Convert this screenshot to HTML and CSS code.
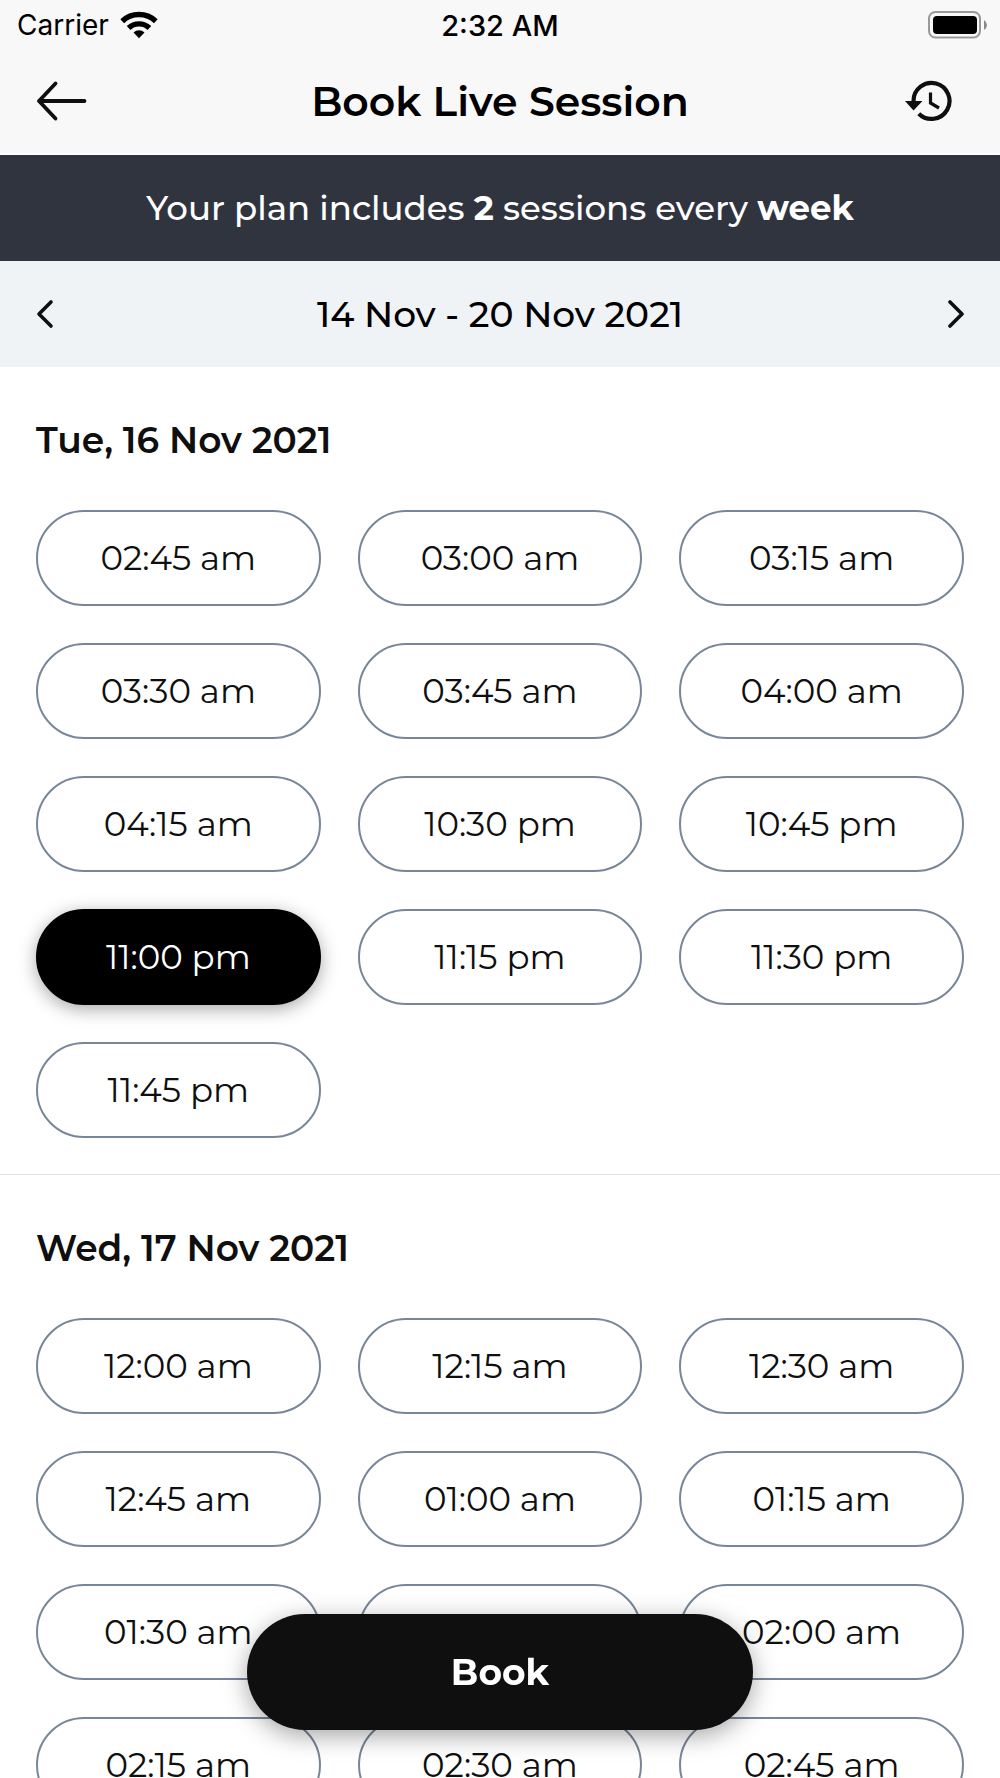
FILE: index.html
```html
<!DOCTYPE html>
<html lang="en">
<head>
<meta charset="utf-8">
<meta name="viewport" content="width=device-width, initial-scale=1">
<title>Book Live Session</title>
<link rel="stylesheet" href="styles.css">
</head>
<body>
<div class="app">
  <header class="top">
    <div class="status">
      <div class="status-left">
        <span>Carrier</span>
        <svg width="38" height="28" viewBox="0 0 38 28" aria-hidden="true">
          <g fill="none" stroke="#000" stroke-width="5.4">
            <path d="M2.2 10.2A24.5 24.5 0 0 1 35.8 10.2"/>
            <path d="M8.6 17A15.2 15.2 0 0 1 29.4 17"/>
          </g>
          <path d="M19 27.2L13.5 21.4A8.2 8.2 0 0 1 24.5 21.4Z"/>
        </svg>
      </div>
      <span class="status-time">2:32 AM</span>
      <svg class="status-battery" width="60" height="28" viewBox="0 0 60 28" aria-hidden="true">
        <rect x="1" y="1" width="51" height="25.500" rx="6.500" fill="none" stroke="#999" stroke-width="2"/>
        <rect x="5" y="5" width="44" height="18" rx="4"/>
        <path d="M56 9Q59 11 59 14T56 19Z" fill="#888"/>
      </svg>
    </div>
    <div class="nav">
      <button class="icon-button" type="button" aria-label="Back">
        <svg width="52" height="42" viewBox="0 0 52 42">
          <path d="M19.500 3.500L3 21L19.500 38.500M3 21H48.500" fill="none" stroke="#0f0f0f" stroke-width="3.800" stroke-linecap="round" stroke-linejoin="round"/>
        </svg>
      </button>
      <h1 class="title">Book Live Session</h1>
      <button class="icon-button" type="button" aria-label="Session history">
        <svg width="48" height="42" viewBox="0 0 48 42">
          <path d="M9.500 21A18 18 0 1 1 14.800 33.700" fill="none" stroke="#0f0f0f" stroke-width="4.200"/>
          <path d="M1 21H18.500L9.500 30.500Z" fill="#0f0f0f"/>
          <path d="M26.500 12.500V23L35 28" fill="none" stroke="#0f0f0f" stroke-width="3.200"/>
        </svg>
      </button>
    </div>
  </header>

  <p class="plan">Your plan includes <strong>2</strong> sessions every <strong>week</strong></p>

  <div class="week">
    <button class="icon-button" type="button" aria-label="Previous week">
      <svg width="18" height="30" viewBox="0 0 18 30"><path d="M15 3L3 15L15 27" fill="none" stroke="#0f0f0f" stroke-width="3.600" stroke-linecap="round" stroke-linejoin="round"/></svg>
    </button>
    <span class="week-range">14 Nov - 20 Nov 2021</span>
    <button class="icon-button" type="button" aria-label="Next week">
      <svg width="18" height="30" viewBox="0 0 18 30"><path d="M4 3L16 15L4 27" fill="none" stroke="#0f0f0f" stroke-width="3.600" stroke-linecap="round" stroke-linejoin="round"/></svg>
    </button>
  </div>

  <main class="days">
    <section class="day">
      <h2 class="day-title">Tue, 16 Nov 2021</h2>
      <div class="slots">
        <button class="slot" type="button">02:45 am</button>
        <button class="slot" type="button">03:00 am</button>
        <button class="slot" type="button">03:15 am</button>
        <button class="slot" type="button">03:30 am</button>
        <button class="slot" type="button">03:45 am</button>
        <button class="slot" type="button">04:00 am</button>
        <button class="slot" type="button">04:15 am</button>
        <button class="slot" type="button">10:30 pm</button>
        <button class="slot" type="button">10:45 pm</button>
        <button class="slot slot-selected" type="button" aria-pressed="true">11:00 pm</button>
        <button class="slot" type="button">11:15 pm</button>
        <button class="slot" type="button">11:30 pm</button>
        <button class="slot" type="button">11:45 pm</button>
      </div>
    </section>
    <section class="day">
      <h2 class="day-title">Wed, 17 Nov 2021</h2>
      <div class="slots">
        <button class="slot" type="button">12:00 am</button>
        <button class="slot" type="button">12:15 am</button>
        <button class="slot" type="button">12:30 am</button>
        <button class="slot" type="button">12:45 am</button>
        <button class="slot" type="button">01:00 am</button>
        <button class="slot" type="button">01:15 am</button>
        <button class="slot" type="button">01:30 am</button>
        <button class="slot" type="button">01:45 am</button>
        <button class="slot" type="button">02:00 am</button>
        <button class="slot" type="button">02:15 am</button>
        <button class="slot" type="button">02:30 am</button>
        <button class="slot" type="button">02:45 am</button>
      </div>
    </section>
  </main>

  <button class="book" type="button">Book</button>
</div>
</body>
</html>
```
FILE: styles.css
```css
* {
  box-sizing: border-box;
}

body {
  margin: 0;
  background: #fff;
  color: #0f0f0f;
  font-family: Montserrat, Inter, "Open Sans", sans-serif;
}

button {
  padding: 0;
  border: 0;
  background: none;
  color: inherit;
  font: inherit;
  cursor: pointer;
}

svg {
  display: block;
}

.app {
  display: flex;
  flex-direction: column;
  height: 100vh;
}

.top {
  flex: none;
  background: #f8f8f8;
  border-bottom: 2px solid #fff;
  color: #000;
}

.status {
  display: grid;
  grid-template-columns: 1fr auto 1fr;
  align-items: center;
  height: 50px;
  padding: 0 12px;
  font-family: Inter, sans-serif;
  font-size: 28px;
}

.status-left {
  display: flex;
  align-items: center;
  gap: 11px;
  padding-left: 5px;
}

.status-time {
  font-size: 29px;
  font-weight: 500;
}

.status-battery {
  justify-self: end;
}

.nav {
  display: grid;
  grid-template-columns: 60px 1fr 60px;
  align-items: center;
  justify-items: start;
  height: 103px;
  padding: 0 36px 2px;
}

.title {
  justify-self: center;
  margin: 0;
  font-size: 41px;
  font-weight: 600;
}

.plan {
  flex: none;
  margin: 0;
  padding: 0 36px;
  background: #30343f;
  color: #fff;
  font-size: 34px;
  font-weight: 500;
  line-height: 106px;
  text-align: center;
}

.plan strong {
  font-weight: 700;
}

.week {
  flex: none;
  display: flex;
  align-items: center;
  justify-content: space-between;
  height: 106px;
  padding: 0 36px;
  background: #eff3f6;
  color: #000;
}

.week-range {
  font-size: 36px;
  font-weight: 500;
}

.days {
  flex: 1;
  min-height: 0;
  overflow-y: auto;
  scrollbar-width: none;
}

.day {
  padding: 50px 36px 36px;
}

.day + .day {
  border-top: 1px solid #dce2e5;
}

.day-title {
  margin: 0 0 47px;
  font-size: 36px;
  font-weight: 600;
  line-height: 46px;
}

.slots {
  display: grid;
  grid-template-columns: repeat(3, 1fr);
  gap: 37px;
}

.slot {
  height: 96px;
  border: 2px solid #788699;
  border-radius: 48px;
  font-size: 34px;
  font-weight: 400;
}

.slot-selected {
  border-color: #000;
  background: #000;
  color: #fff;
  box-shadow: 0 4px 18px rgba(0, 0, 0, 0.35);
}

.book {
  position: fixed;
  right: 0;
  bottom: 48px;
  left: 0;
  width: 506px;
  max-width: 90%;
  height: 116px;
  margin: 0 auto;
  border-radius: 58px;
  background: #0f0f0f;
  color: #fff;
  font-size: 36px;
  font-weight: 700;
  box-shadow: 0 6px 24px rgba(0, 0, 0, 0.35);
}
```
